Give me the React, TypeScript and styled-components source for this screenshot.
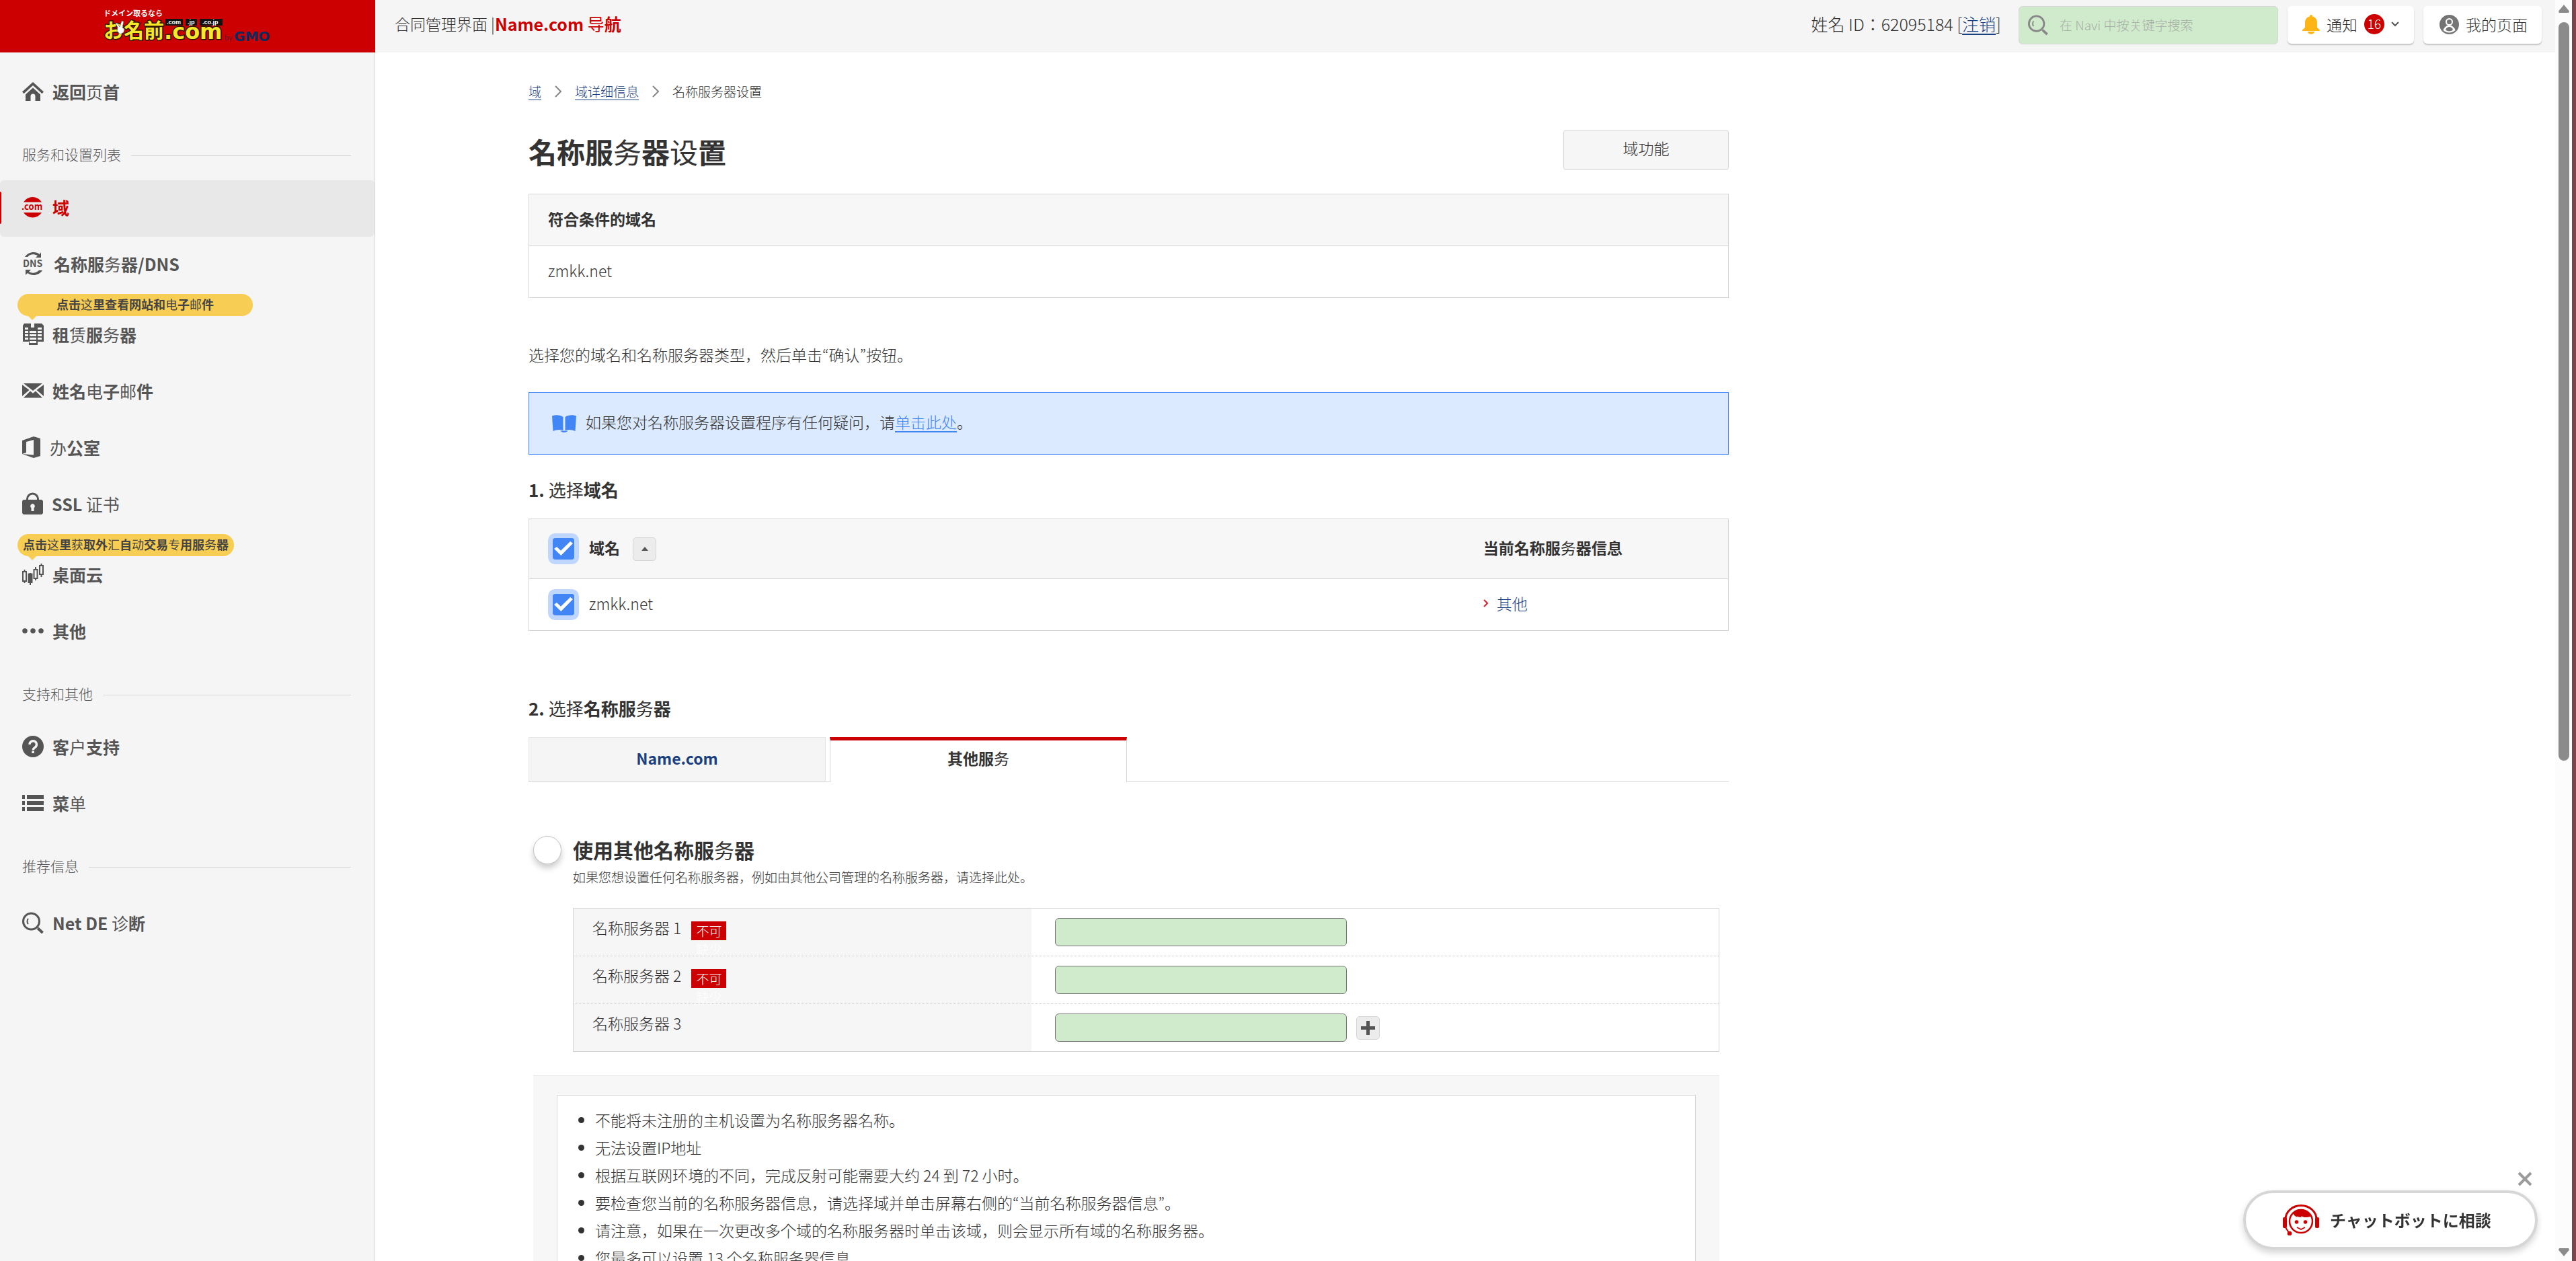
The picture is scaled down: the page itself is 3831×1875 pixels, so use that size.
import React, { useState } from "react";
import styled, { createGlobalStyle, css } from "styled-components";

const color = {
  brand: "#cc0000",
  text: "#333333",
  nav: "#555555",
  link: "#1a3f80",
  blue: "#4285f4",
  line: "#d6d6d6",
  panel: "#f5f5f5",
  head: "#f7f7f7",
  field: "#d0ebcb",
};

const GlobalStyle = createGlobalStyle`
  *, *::before, *::after { box-sizing: border-box; }
  html, body, #root { height: 100%; }
  body {
    margin: 0;
    overflow: hidden;
    background: #fff;
    color: ${color.text};
    font-family: "Noto Sans CJK JP", "Noto Sans CJK SC", sans-serif;
    font-size: 23px;
    font-weight: 300;
    line-height: 40px;
  }
  h1, h2, h3, p, ul { margin: 0; padding: 0; }
  button, input { font: inherit; color: inherit; }
  button { cursor: pointer; padding: 0; }
`;

const LIGHT_GLYPHS = /([务设页赁电邮办证书选择户单诊导这专动汇获]+)/;

const Light = styled.span`
  font-weight: 400;
`;

function Bold({ children }: { children: string }) {
  return (
    <>
      {children.split(LIGHT_GLYPHS).map((part, i) =>
        i % 2 ? <Light key={i}>{part}</Light> : part
      )}
    </>
  );
}

/* ---------- frame ---------- */

const Frame = styled.div`
  display: grid;
  grid-template-columns: 558px minmax(0, 1fr) 25px;
  height: 100vh;
  overflow: hidden;
  border-right: 6px solid #7a444a;
`;

const Rail = styled.div`
  display: flex;
  flex-direction: column;
  align-items: center;
  gap: 14px;
  padding: 7px 0;
  background: #fcfcfc;
`;

const Thumb = styled.div`
  width: 16px;
  height: 59%;
  min-height: 40px;
  margin-bottom: auto;
  border-radius: 8px;
  background: #8b8b8b;
`;

/* ---------- sidebar ---------- */

const Sidebar = styled.aside`
  border-right: 1px solid ${color.line};
  background: ${color.panel};
  color: ${color.nav};
`;

const LogoBar = styled.a`
  display: flex;
  align-items: center;
  height: 78px;
  padding-left: 150px;
  margin-right: -1px;
  background: ${color.brand};
`;

const NavList = styled.nav`
  padding-top: 18px;
`;

const SectionLabel = styled.div<{ $roomy?: boolean }>`
  display: flex;
  align-items: center;
  gap: 15px;
  height: 30px;
  margin: 36px 35px ${(p) => (p.$roomy ? 28 : 22)}px 33px;
  font-size: 21px;
  line-height: 26px;
  span {
    padding-bottom: 4px;
  }
  &::after {
    content: "";
    flex: 1;
    height: 1px;
    background: ${color.line};
  }
`;

const NavLink = styled.a<{ $active?: boolean; $tagged?: boolean }>`
  display: flex;
  align-items: center;
  gap: 13px;
  height: 84px;
  padding: 0 0 4px 33px;
  border-radius: 6px;
  color: inherit;
  font-size: 25px;
  font-weight: 700;
  text-decoration: none;
  svg {
    flex: none;
  }
  ${(p) =>
    p.$tagged &&
    css`
      height: 71px;
      padding-bottom: 18px;
    `}
  ${(p) =>
    p.$active &&
    css`
      position: relative;
      background: #e8e8e8;
      color: ${color.brand};
      &::before {
        content: "";
        position: absolute;
        left: 0;
        top: 17px;
        bottom: 19px;
        width: 2px;
        border-radius: 0 2px 2px 0;
        background: ${color.brand};
      }
    `}
`;

const Bubble = styled.div<{ $width: number }>`
  position: relative;
  width: ${(p) => p.$width}px;
  height: 33px;
  margin: 1px 0 0 26px;
  border-radius: 17px;
  background: #f8cd53;
  color: #444;
  font-size: 18px;
  font-weight: 700;
  line-height: 30px;
  text-align: center;
  white-space: nowrap;
  &::after {
    content: "";
    position: absolute;
    left: 16px;
    top: 33px;
    border: 6px solid transparent;
    border-top-color: #f8cd53;
    border-bottom: 0;
  }
`;

/* ---------- header ---------- */

const Page = styled.div`
  min-width: 0;
  overflow: hidden;
`;

const Header = styled.header`
  display: flex;
  align-items: center;
  height: 78px;
  padding: 0 20px 4px 29px;
  background: ${color.panel};
  font-size: 23px;
`;

const SiteName = styled.div`
  display: flex;
  margin-right: auto;
  padding-bottom: 4px;
  white-space: pre;
  strong {
    color: ${color.brand};
    font-size: 25px;
    font-weight: 700;
  }
`;

const Account = styled.div`
  margin-right: 26px;
  padding-bottom: 4px;
  font-size: 25px;
`;

const TextLink = styled.a<{ $tone?: string }>`
  color: ${(p) => p.$tone || color.link};
  text-decoration: underline;
  text-underline-offset: 4px;
`;

const Search = styled.label`
  display: flex;
  align-items: center;
  gap: 15px;
  width: 386px;
  height: 57px;
  padding-left: 13px;
  border: 1px solid ${color.line};
  border-radius: 6px;
  background: ${color.field};
  color: #888;
  input {
    flex: 1;
    min-width: 0;
    border: 0;
    outline: 0;
    background: transparent;
    font-size: 19px;
  }
  input::placeholder {
    color: #a8aea8;
    opacity: 1;
  }
`;

const headerTile = css`
  display: flex;
  align-items: center;
  height: 56px;
  margin-left: 14px;
  border: 0;
  border-radius: 6px;
  background: #fff;
  box-shadow: 0 2px 2px rgba(0, 0, 0, 0.2);
  color: ${color.text};
  font-size: 23px;
  text-decoration: none;
`;

const NoticeButton = styled.button`
  ${headerTile}
  width: 188px;
  gap: 10px;
  padding: 0 0 2px 22px;
`;

const MyPageLink = styled.a`
  ${headerTile}
  width: 176px;
  gap: 10px;
  padding: 0 0 2px 24px;
`;

const Count = styled.span`
  width: 30px;
  height: 30px;
  border-radius: 50%;
  background: ${color.brand};
  color: #fff;
  font-size: 19px;
  line-height: 28px;
  text-align: center;
`;

/* ---------- content ---------- */

const Main = styled.main`
  max-width: 2241px;
  padding: 43px 228px 0 228px;
`;

const Breadcrumb = styled.nav`
  display: flex;
  align-items: center;
  gap: 20px;
  font-size: 19px;
  line-height: 30px;
`;

const TitleRow = styled.div`
  display: flex;
  justify-content: space-between;
  align-items: flex-start;
  margin: 42px 0 33px;
`;

const PageTitle = styled.h1`
  padding-top: 2px;
  font-size: 42px;
  font-weight: 700;
  line-height: 60px;
`;

const FunctionButton = styled.button`
  width: 246px;
  height: 60px;
  padding-bottom: 6px;
  border: 1px solid ${color.line};
  border-radius: 4px;
  background: #f6f6f6;
`;

const DataTable = styled.table<{ $tall?: boolean }>`
  width: 100%;
  border: 1px solid ${color.line};
  border-spacing: 0;
  th,
  td {
    height: 76px;
    padding: 0 0 4px 28px;
    text-align: left;
  }
  th {
    height: ${(p) => (p.$tall ? 89 : 77)}px;
    border-bottom: 1px solid ${color.line};
    background: ${color.head};
    font-weight: 700;
  }
`;

const CurrentHead = styled.th`
  width: 22%;
`;

const Lead = styled.p`
  margin: 64px 0 36px;
`;

const Guide = styled.div`
  display: flex;
  align-items: center;
  gap: 14px;
  height: 93px;
  padding: 0 34px;
  border: 1px solid ${color.blue};
  background: #dbeaff;
  span {
    padding-bottom: 6px;
  }
`;

const StepTitle = styled.h2<{ $top: number }>`
  margin: ${(p) => p.$top}px 0 23px;
  font-size: 26px;
  font-weight: 700;
  line-height: 40px;
`;

const CheckCell = styled.div`
  display: flex;
  align-items: center;
  padding-top: 4px;
  label {
    padding: 0 0 4px 22px;
  }
`;

const Check = styled.input.attrs({ type: "checkbox" })`
  appearance: none;
  position: relative;
  width: 32px;
  height: 32px;
  margin: 0 0 0 7px;
  border-radius: 4px;
  background: #fff;
  box-shadow: 0 0 0 7px #bfd6ff;
  &:checked {
    background: ${color.blue};
  }
  &:checked::after {
    content: "";
    position: absolute;
    inset: 5px 2px 6px 2px;
    background: #fff;
    clip-path: polygon(0 52%, 14% 38%, 36% 66%, 86% 0, 100% 14%, 37% 100%);
  }
`;

const SmallButton = styled.button<{ $gap: number }>`
  display: inline-flex;
  align-items: center;
  justify-content: center;
  width: 35px;
  height: 35px;
  margin-left: ${(p) => p.$gap}px;
  border: 1px solid ${color.line};
  border-radius: 5px;
  background: #ececec;
`;

const OtherLink = styled.a`
  display: inline-flex;
  align-items: center;
  gap: 13px;
  color: ${color.link};
  text-decoration: none;
  vertical-align: top;
`;

const Tabs = styled.div`
  display: flex;
  gap: 6px;
  height: 67px;
  border-bottom: 1px solid ${color.line};
`;

const Tab = styled.button<{ $on?: boolean }>`
  width: 442px;
  border: 1px solid #e5e5e5;
  border-bottom: 0;
  background: ${color.panel};
  color: ${color.link};
  font-weight: 700;
  line-height: 40px;
  padding-bottom: 6px;
  ${(p) =>
    p.$on &&
    css`
      height: 67px;
      padding-bottom: 11px;
      border-color: ${color.line};
      border-top: 5px solid ${color.brand};
      background: #fff;
      color: ${color.text};
    `}
`;

const Choice = styled.section`
  margin: 80px 14px 0 7px;
`;

const ChoiceHead = styled.div`
  display: flex;
  align-items: flex-start;
  gap: 17px;
`;

const Radio = styled.input.attrs({ type: "radio" })`
  appearance: none;
  flex: none;
  width: 42px;
  height: 42px;
  margin: 0;
  border: 1px solid #c4c4c4;
  border-radius: 50%;
  background: #fff;
  box-shadow: 0 6px 10px rgba(0, 0, 0, 0.2);
`;

const ChoiceTitle = styled.h3`
  font-size: 30px;
  font-weight: 700;
  line-height: 40px;
`;

const ChoiceNote = styled.p`
  padding-top: 5px;
  font-size: 19px;
  line-height: 32px;
`;

const ServerForm = styled.div`
  margin: 30px 0 35px 59px;
  border: 1px solid ${color.line};
`;

const ServerRow = styled.div`
  display: grid;
  grid-template-columns: 2fr 3fr;
  height: 71px;
  & + & {
    border-top: 1px dotted #c8c8c8;
  }
  &:first-child {
    height: 70px;
  }
`;

const ServerName = styled.label`
  display: flex;
  gap: 15px;
  padding: 8px 28px 0;
  background: #f6f6f6;
`;

const Required = styled.span`
  width: 52px;
  height: 28px;
  margin-top: 11px;
  padding: 0 7px;
  background: ${color.brand};
  color: #fff;
  font-size: 19px;
  line-height: 27px;
`;

const ServerField = styled.div`
  display: flex;
  align-items: center;
  padding-left: 35px;
`;

const HostInput = styled.input`
  width: 434px;
  height: 42px;
  border: 1px solid #767676;
  border-radius: 6px;
  background: ${color.field};
`;

const NotePanel = styled.div`
  padding: 28px 35px;
  border-top: 1px solid #e6e6e6;
  background: ${color.head};
`;

const NoteList = styled.ul`
  padding: 16px 20px 20px 56px;
  border: 1px solid ${color.line};
  background: #fff;
  line-height: 41px;
`;

/* ---------- chat ---------- */

const Chat = styled.div`
  position: fixed;
  right: 57px;
  bottom: 17px;
  display: flex;
  flex-direction: column;
  align-items: flex-end;
  gap: 6px;
`;

const ChatClose = styled.button`
  display: flex;
  margin-right: 8px;
  border: 0;
  background: none;
`;

const ChatButton = styled.button`
  display: flex;
  align-items: center;
  gap: 16px;
  height: 88px;
  width: 438px;
  padding: 0 0 0 55px;
  border: 4px solid ${color.line};
  border-radius: 44px;
  background: #fff;
  box-shadow: 0 5px 10px rgba(0, 0, 0, 0.16);
  font-size: 24px;
  font-weight: 700;
`;

/* ---------- drawings ---------- */

const cjk = "'Noto Sans CJK JP', sans-serif";

function Logo() {
  return (
    <svg width="258" height="58" viewBox="0 0 258 58" role="img" aria-label="お名前.com">
      <g fontFamily={cjk} fontWeight="700">
        <text x="4" y="14" fontSize="11" fill="#fff">ドメイン取るなら</text>
        <g fill="#f7e82c" stroke="#2a1500" strokeWidth="3" strokeLinejoin="round" paintOrder="stroke">
          <text x="4" y="46" fontSize="30">お名前</text>
          <text x="94" y="48" fontSize="32" fontFamily="'DejaVu Sans', sans-serif">.com</text>
        </g>
        <path d="M96 18h26v10H96zM126 18h17v10h-17zM147 18h34v10h-34z" fill="#111" />
        <g fontSize="9" fill="#fff" fontFamily="'Liberation Sans', sans-serif">
          <text x="98" y="26">.com</text>
          <text x="129" y="26">.jp</text>
          <text x="151" y="26">.co.jp</text>
        </g>
      </g>
      <path d="M24 36l1-5-3-6 2-1 4 6 3-9 3 1-2 9 3 2-1 5-5 3z" fill="#fff" stroke="#555" strokeWidth="0.6" />
      <g fill="#0b2a5e" fontFamily="Lato, sans-serif">
        <text x="184" y="50" fontSize="11">by</text>
        <text x="198" y="51" fontSize="20" fontWeight="700" fontFamily="'DejaVu Sans', sans-serif">GMO</text>
      </g>
    </svg>
  );
}

const Ico = ({ w = 32, h = 32, box, children }: { w?: number; h?: number; box?: string; children: React.ReactNode }) => (
  <svg width={w} height={h} viewBox={box || `0 0 ${w} ${h}`} fill="currentColor" overflow="visible" aria-hidden="true">
    {children}
  </svg>
);

const HomeIcon = () => (
  <Ico>
    <path d="M16 2L0 16.500l2.500 2.800L16 7l13.500 12.300L32 16.500z" />
    <path d="M16 10.500L5 20.500V30h7.500v-7a3.500 3.500 0 0 1 7 0v7H27v-9.500z" />
  </Ico>
);

const ComIcon = () => (
  <Ico>
    <path d="M2 8.500a16 16 0 0 1 27 0zM2 24a16 16 0 0 0 27 0z" />
    <text x="-1" y="20" fontSize="13" fontWeight="700" fontFamily={cjk}>.com</text>
  </Ico>
);

const DnsIcon = () => (
  <Ico w={34} h={34}>
    <path d="M4 7C9-1 20-2 26 3l2-3v8h-8l3-3C17 2 11 3 8 7zM30 27c-5 8-16 9-22 4l-3 3v-8h8l-3 3c5 3 11 2 15-2z" />
    <text x="1" y="22" fontSize="14" fontWeight="700" fontFamily={cjk}>DNS</text>
  </Ico>
);

const ServerIcon = () => (
  <Ico>
    <path
      fillRule="evenodd"
      d="M3 0h10v6h5V0h11l3 3v24h-9v5H10v-5H1V3zM4 6v3h5V6zm0 5v3h5v-3zm0 5v3h5v-3zm0 5v3h5v-3zm7-10v3h10v-3zm0 5v3h10v-3zm0 5v3h10v-3zm0 5v3h10v-3zM23 6v3h6V6zm0 5v3h6v-3zm0 5v3h6v-3zm0 5v3h6v-3z"
    />
  </Ico>
);

const MailIcon = () => (
  <Ico h={24}>
    <path d="M2 1h28L16 12zM0 3l10.500 8L0 20zM32 3v17l-10.500-9zM12 12.500l4 3.200 4-3.200L30 22.500H2z" />
  </Ico>
);

const OfficeIcon = () => (
  <Ico w={28}>
    <path d="M0 6L17 0l10 3v26l-10 3L0 26l17 1.500V5L6 8v16l-6 2z" />
  </Ico>
);

const LockIcon = () => (
  <Ico w={31}>
    <path d="M6 11V9a9.500 9.500 0 0 1 19 0v2h-3V9A6.500 6.500 0 0 0 9 9v2z" />
    <path
      fillRule="evenodd"
      d="M2 10h27l2 2v18l-2 2H2l-2-2V12zm13.500 6a3.500 3.500 0 0 0-2 6.200V27h4v-4.800a3.500 3.500 0 0 0-2-6.200z"
    />
  </Ico>
);

const CandleIcon = () => (
  <Ico>
    <path d="M3.500 9v20M20 5v20M28.500 0v20M12 14v18" stroke="currentColor" strokeWidth="2" />
    <path d="M1 12h5v14H1zM17.500 9h5v13h-5zM26 3h5v13h-5z" fill={color.panel} stroke="currentColor" strokeWidth="2" />
    <path d="M8.500 14.500h7V29h-7z" />
  </Ico>
);

const DotsIcon = () => (
  <Ico h={8}>
    <circle cx="4" cy="4" r="3.800" />
    <circle cx="16" cy="4" r="3.800" />
    <circle cx="28" cy="4" r="3.800" />
  </Ico>
);

const HelpIcon = () => (
  <Ico>
    <circle cx="16" cy="16" r="16" />
    <path d="M11 13a5.200 5.200 0 1 1 8 4.300c-2 1.400-2.800 2-2.800 4" fill="none" stroke={color.panel} strokeWidth="3.400" />
    <path d="M14.300 22.500h3.600V26h-3.600z" fill={color.panel} />
  </Ico>
);

const MenuIcon = () => (
  <Ico h={26}>
    <path d="M0 1h4v6H0zM7 1h25v6H7zM0 10h4v6H0zM7 10h25v6H7zM0 19h4v6H0zM7 19h25v6H7z" />
  </Ico>
);

const LensIcon = ({ size = 32 }: { size?: number }) => (
  <Ico w={size} h={size} box="0 0 32 32">
    <circle cx="13.500" cy="14" r="12" fill="none" stroke="currentColor" strokeWidth="3" />
    <path d="M9 10c-2 2-2 6 0 8" fill="none" stroke="currentColor" strokeWidth="2" />
    <path d="M23 24l7.500 7" stroke="currentColor" strokeWidth="4" />
  </Ico>
);

const Chevron = ({ w = 10, h = 18, tone = "#888", line = 2 }) => (
  <svg width={w} height={h} viewBox={`0 0 ${w} ${h}`} aria-hidden="true">
    <path d={`M1 1L${w - 1} ${h / 2}L1 ${h - 1}`} fill="none" stroke={tone} strokeWidth={line} />
  </svg>
);

const BellIcon = () => (
  <svg width="26" height="29" viewBox="0 0 26 29" aria-hidden="true">
    <path d="M13 0c1.500 0 2 1 2 2.500 5 1 7 5 7 9.500v7l4 3.500V24H0v-1.500L4 19v-7c0-4.500 2-8.500 7-9.500C11 1 11.500 0 13 0zM8 25h10c0 5-10 5-10 0z" fill="#fdb515" />
  </svg>
);

const UserIcon = () => (
  <svg width="29" height="29" viewBox="0 0 29 29" aria-hidden="true">
    <circle cx="14.500" cy="14.500" r="14.500" fill="#757575" />
    <circle cx="14.500" cy="10.500" r="5.500" fill="#fff" />
    <path d="M5.500 23c1-4 4-6 6-7h6c2 1 5 3 6 7-5 4.500-13 4.500-18 0z" fill="#fff" />
    <circle cx="14.500" cy="10.500" r="3.500" fill="#757575" />
    <path d="M9 22.500c1-3 3-4.500 5.500-4.500s4.500 1.500 5.500 4.500c-3 2.500-8 2.500-11 0z" fill="#757575" />
  </svg>
);

const BookIcon = () => (
  <svg width="36" height="26" viewBox="0 0 36 26" aria-hidden="true">
    <path d="M0 1.500C5-.5 12-.5 16.500 3v20C12 21 6 22 1.500 24zM36 1.500C31-.5 24-.5 19.500 3v20c4.500-2 10.500-1 15 1zM12 23.500h12c-1.500 1-3 2.500-6 2.500s-4.500-1.500-6-2.500z" fill={color.blue} />
  </svg>
);

const AgentIcon = () => (
  <svg width="54" height="46" viewBox="0 0 54 46" aria-hidden="true">
    <g fill="none" stroke={color.brand}>
      <path d="M4 22a23 20.500 0 0 1 46 0" strokeWidth="3" />
      <circle cx="27" cy="25" r="17" strokeWidth="2.500" />
      <path d="M21 34l6 3 6-3" strokeWidth="1.800" />
      <path d="M4 34l5 8" strokeWidth="2" />
    </g>
    <g fill={color.brand}>
      <rect x="0" y="19" width="6" height="16" rx="2" />
      <rect x="48" y="19" width="6" height="16" rx="2" />
      <circle cx="20.500" cy="26" r="2.800" />
      <circle cx="33.500" cy="26" r="2.800" />
      <circle cx="10" cy="43" r="3.300" />
      <path d="M15 12c6-7 19-7 25 2l1 4c-6 2-11 1-14-1l1 2c-4 0-6-1-7-2l1 2c-3-1-6-3-7-7z" />
    </g>
  </svg>
);

const CloseIcon = () => (
  <svg width="22" height="22" viewBox="0 0 22 22" aria-hidden="true">
    <path d="M2 2l18 18M20 2L2 20" stroke="#9b9b9b" strokeWidth="4" />
  </svg>
);

/* ---------- page ---------- */

type Item = {
  text: string;
  icon: React.ReactNode;
  active?: boolean;
  bubble?: { text: string; width: number };
};

const services: Item[] = [
  { text: "域", icon: <ComIcon />, active: true },
  { text: "名称服务器/DNS", icon: <DnsIcon /> },
  { text: "租赁服务器", icon: <ServerIcon />, bubble: { text: "点击这里查看网站和电子邮件", width: 350 } },
  { text: "姓名电子邮件", icon: <MailIcon /> },
  { text: "办公室", icon: <OfficeIcon /> },
  { text: "SSL 证书", icon: <LockIcon /> },
  { text: "桌面云", icon: <CandleIcon />, bubble: { text: "点击这里获取外汇自动交易专用服务器", width: 322 } },
  { text: "其他", icon: <DotsIcon /> },
];

const support: Item[] = [
  { text: "客户支持", icon: <HelpIcon /> },
  { text: "菜单", icon: <MenuIcon /> },
];

const notes = [
  "不能将未注册的主机设置为名称服务器名称。",
  "无法设置IP地址",
  "根据互联网环境的不同，完成反射可能需要大约 24 到 72 小时。",
  "要检查您当前的名称服务器信息，请选择域并单击屏幕右侧的“当前名称服务器信息”。",
  "请注意，如果在一次更改多个域的名称服务器时单击该域，则会显示所有域的名称服务器。",
  "您最多可以设置 13 个名称服务器信息",
];

function NavItem({ item }: { item: Item }) {
  return (
    <>
      {item.bubble && (
        <Bubble $width={item.bubble.width}>
          <Bold>{item.bubble.text}</Bold>
        </Bubble>
      )}
      <NavLink href="#" $active={item.active} $tagged={!!item.bubble}>
        {item.icon}
        <span>
          <Bold>{item.text}</Bold>
        </span>
      </NavLink>
    </>
  );
}

export default function App() {
  const [checked, setChecked] = useState(true);
  const toggle = () => setChecked(!checked);

  return (
    <>
      <GlobalStyle />
      <Frame>
        <Sidebar>
          <LogoBar href="#">
            <Logo />
          </LogoBar>
          <NavList>
            <NavItem item={{ text: "返回页首", icon: <HomeIcon /> }} />
            <SectionLabel>
              <span>服务和设置列表</span>
            </SectionLabel>
            {services.map((item) => (
              <NavItem key={item.text} item={item} />
            ))}
            <SectionLabel>
              <span>支持和其他</span>
            </SectionLabel>
            {support.map((item) => (
              <NavItem key={item.text} item={item} />
            ))}
            <SectionLabel $roomy>
              <span>推荐信息</span>
            </SectionLabel>
            <NavItem item={{ text: "Net DE 诊断", icon: <LensIcon /> }} />
          </NavList>
        </Sidebar>

        <Page>
          <Header>
            <SiteName>
              合同管理界面 |
              <strong>
                <Bold>Name.com 导航</Bold>
              </strong>
            </SiteName>
            <Account>
              姓名 ID：62095184 [<TextLink href="#">注销</TextLink>]
            </Account>
            <Search>
              <LensIcon size={30} />
              <input type="search" placeholder="在 Navi 中按关键字搜索" aria-label="在 Navi 中按关键字搜索" />
            </Search>
            <NoticeButton type="button">
              <BellIcon />
              通知
              <Count>16</Count>
              <svg width="12" height="8" viewBox="0 0 12 8" aria-hidden="true">
                <path d="M1 1l5 5 5-5" fill="none" stroke="#555" strokeWidth="2" />
              </svg>
            </NoticeButton>
            <MyPageLink href="#">
              <UserIcon />
              我的页面
            </MyPageLink>
          </Header>

          <Main>
            <Breadcrumb>
              <TextLink href="#">域</TextLink>
              <Chevron />
              <TextLink href="#">域详细信息</TextLink>
              <Chevron />
              <span>名称服务器设置</span>
            </Breadcrumb>

            <TitleRow>
              <PageTitle>
                <Bold>名称服务器设置</Bold>
              </PageTitle>
              <FunctionButton type="button">域功能</FunctionButton>
            </TitleRow>

            <DataTable>
              <thead>
                <tr>
                  <th>符合条件的域名</th>
                </tr>
              </thead>
              <tbody>
                <tr>
                  <td>zmkk.net</td>
                </tr>
              </tbody>
            </DataTable>

            <Lead>选择您的域名和名称服务器类型，然后单击“确认”按钮。</Lead>

            <Guide>
              <BookIcon />
              <span>
                如果您对名称服务器设置程序有任何疑问，请
                <TextLink href="#" $tone={color.blue}>单击此处</TextLink>。
              </span>
            </Guide>

            <StepTitle $top={32}>
              <Bold>1. 选择域名</Bold>
            </StepTitle>
            <DataTable $tall>
              <thead>
                <tr>
                  <th>
                    <CheckCell>
                      <Check id="all" checked={checked} onChange={toggle} />
                      <label htmlFor="all">域名</label>
                      <SmallButton type="button" $gap={19} aria-label="升序">
                        <svg width="10" height="6" viewBox="0 0 10 6" aria-hidden="true">
                          <path d="M5 0l5 6H0z" fill="#555" />
                        </svg>
                      </SmallButton>
                    </CheckCell>
                  </th>
                  <CurrentHead>
                    <Bold>当前名称服务器信息</Bold>
                  </CurrentHead>
                </tr>
              </thead>
              <tbody>
                <tr>
                  <td>
                    <CheckCell>
                      <Check id="zmkk" checked={checked} onChange={toggle} />
                      <label htmlFor="zmkk">zmkk.net</label>
                    </CheckCell>
                  </td>
                  <td>
                    <OtherLink href="#">
                      <Chevron w={7} h={12} tone="#d9232e" />
                      其他
                    </OtherLink>
                  </td>
                </tr>
              </tbody>
            </DataTable>

            <StepTitle $top={95}>
              <Bold>2. 选择名称服务器</Bold>
            </StepTitle>
            <Tabs role="tablist">
              <Tab type="button" role="tab">Name.com</Tab>
              <Tab type="button" role="tab" aria-selected="true" $on>
                <Bold>其他服务</Bold>
              </Tab>
            </Tabs>

            <Choice>
              <ChoiceHead>
                <Radio id="other" name="kind" />
                <div>
                  <ChoiceTitle>
                    <label htmlFor="other">
                      <Bold>使用其他名称服务器</Bold>
                    </label>
                  </ChoiceTitle>
                  <ChoiceNote>
                    如果您想设置任何名称服务器，例如由其他公司管理的名称服务器，请选择此处。
                  </ChoiceNote>
                </div>
              </ChoiceHead>

              <ServerForm>
                {[1, 2, 3].map((n) => (
                  <ServerRow key={n}>
                    <ServerName htmlFor={`ns${n}`}>
                      名称服务器 {n}
                      {n < 3 && <Required>不可缺少</Required>}
                    </ServerName>
                    <ServerField>
                      <HostInput id={`ns${n}`} type="text" />
                      {n === 3 && (
                        <SmallButton type="button" $gap={14} aria-label="添加">
                          <svg width="21" height="21" viewBox="0 0 21 21" aria-hidden="true">
                            <path d="M10.500 0v21M0 10.500h21" stroke="#555" strokeWidth="5" />
                          </svg>
                        </SmallButton>
                      )}
                    </ServerField>
                  </ServerRow>
                ))}
              </ServerForm>

              <NotePanel>
                <NoteList>
                  {notes.map((note) => (
                    <li key={note}>{note}</li>
                  ))}
                </NoteList>
              </NotePanel>
            </Choice>
          </Main>
        </Page>

        <Rail aria-hidden="true">
          <svg width="18" height="12" viewBox="0 0 18 12">
            <path d="M9 0l8 9.500L16 12H2L1 9.500z" fill="#8b8b8b" />
          </svg>
          <Thumb />
          <svg width="18" height="12" viewBox="0 0 18 12">
            <path d="M9 12l8-9.500L16 0H2L1 2.500z" fill="#8b8b8b" />
          </svg>
        </Rail>
      </Frame>

      <Chat>
        <ChatClose type="button" aria-label="閉じる">
          <CloseIcon />
        </ChatClose>
        <ChatButton type="button">
          <AgentIcon />
          チャットボットに相談
        </ChatButton>
      </Chat>
    </>
  );
}
